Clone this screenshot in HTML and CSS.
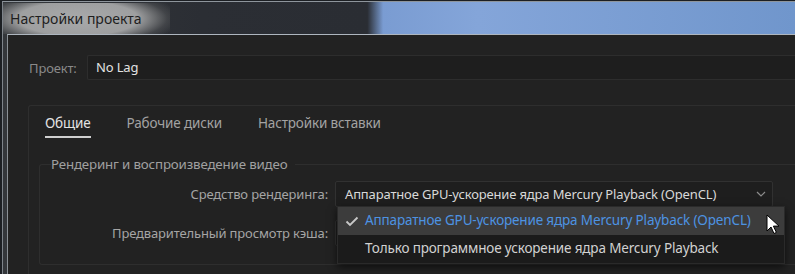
FILE: index.html
```html
<!DOCTYPE html>
<html lang="ru">
<head>
    <meta charset="UTF-8">
    <title>Настройки проекта</title>
    <link rel="stylesheet" href="styles.css">
</head>
<body>
    <div class="frame">
        <div class="titlebar">
            <span class="title">Настройки проекта</span>
        </div>
        <div class="window">
            <div class="project-row">
                <span class="project-label">Проект:</span>
                <div class="project-field">No Lag</div>
            </div>

            <div class="panel">
                <div class="tabs">
                    <span class="tab active">Общие</span>
                    <span class="tab">Рабочие диски</span>
                    <span class="tab">Настройки вставки</span>
                </div>

                <fieldset class="group">
                    <legend>Рендеринг и воспроизведение видео</legend>
                    <div class="rows">
                        <span class="row-label">Средство рендеринга:</span>
                        <div class="select open">
                            <span>Аппаратное GPU-ускорение ядра Mercury Playback (OpenCL)</span>
                            <svg class="chevron" width="10" height="6" viewBox="0 0 10 6"><path d="M1 1l4 4 4-4" fill="none" stroke="#8c8c8c" stroke-width="1.2"/></svg>
                            <ul class="menu">
                                <li class="selected">
                                    <svg class="check" width="14" height="11" viewBox="0 0 14 11"><path d="M1.5 5.5l3.5 3.5 7.5-7.5" fill="none" stroke="#c8c8c8" stroke-width="1.8"/></svg>
                                    Аппаратное GPU-ускорение ядра Mercury Playback (OpenCL)
                                </li>
                                <li>Только программное ускорение ядра Mercury Playback</li>
                            </ul>
                            <svg class="cursor" width="14" height="21" viewBox="0 0 14 21"><path d="M1 1v16l4-4 3 6.5 2.4-1.1-3-6.3h5.6z" fill="#fff" stroke="#000" stroke-width="1"/></svg>
                        </div>

                        <span class="row-label">Предварительный просмотр кэша:</span>
                        <div class="select"><span>Нет</span></div>
                    </div>
                </fieldset>
            </div>
        </div>
    </div>
</body>
</html>
```

FILE: styles.css
```css
body {
    margin: 0;
    width: 795px;
    height: 274px;
    overflow: hidden;
    background: #1c1f23;
    font-family: "Noto Sans", "Open Sans", sans-serif;
    font-size: 13px;
    letter-spacing: -0.15px;
}
.frame {
    box-sizing: border-box;
    margin: 1px 0 0 2px;
    height: 273px;
    border-left: 1px solid #7e848b;
    border-top: 1px solid #8e959c;
    padding-left: 4px;
    background: linear-gradient(to right, #34373b 0, #2b2e34 25%, #2a2d33 46%, #7a9cd2 48%, #84a5d9 60%, #7096cc 100%);
    display: flex;
    flex-direction: column;
    overflow: hidden;
}
.titlebar {
    height: 32px;
    flex: none;
    display: flex;
    align-items: center;
    margin-left: -4px;
}
.title {
    padding: 6px 28px 6px 7px;
    font-size: 14px;
    letter-spacing: 0;
    color: #1e1e1e;
    background: radial-gradient(ellipse 62% 95% at 45% 50%, #a8a9aa 0, #9e9fa0 58%, rgba(80,82,85,0.6) 86%, rgba(45,48,52,0) 100%);
}
.window {
    flex: 1;
    background: #222222;
    border-top: 1px solid #aeb6bf;
    border-left: 1px solid #8a9096;
    padding: 20px 0 0 21px;
}
.project-row {
    display: flex;
    align-items: center;
    height: 25px;
}
.project-label {
    width: 58px;
    color: #8a8a8a;
}
.project-field {
    flex: 1;
    height: 23px;
    line-height: 23px;
    padding-left: 8px;
    background: #1e1e1e;
    border: 1px solid #2d2d2d;
    border-right: none;
    border-radius: 2px 0 0 2px;
    color: #e2e2e2;
}
.panel {
    margin: 25px 0 0 -1px;
    border: 1px solid #2e2e2e;
    border-right: none;
    border-bottom: none;
    border-radius: 3px 0 0 0;
    padding: 8px 0 0 10px;
    height: 180px;
}
.tabs {
    display: flex;
    gap: 36px;
    padding-left: 6px;
    font-size: 13.5px;
}
.tab {
    color: #a3a3a3;
    padding-bottom: 4px;
    border-bottom: 2px solid transparent;
}
.tab.active {
    color: #e4e4e4;
    border-bottom-color: #cfcfcf;
}
.group {
    margin: 16px 0 0 0;
    border: 1px solid #2e2e2e;
    border-right: none;
    border-radius: 3px 0 0 3px;
    padding: 7px 0 18px 11px;
    min-width: 0;
}
.group legend {
    padding: 0 8px 0 0;
    line-height: 20px;
    font-size: 13.3px;
    color: #a0a0a0;
}
.rows {
    display: grid;
    grid-template-columns: 277px 438px;
    column-gap: 7px;
    row-gap: 13px;
    align-items: center;
}
.row-label {
    text-align: right;
    color: #a5a5a5;
    white-space: nowrap;
}
.select {
    position: relative;
    height: 24px;
    display: flex;
    align-items: center;
    justify-content: space-between;
    padding: 0 6px 0 9px;
    background: #1e1e1e;
    border: 1px solid #313131;
    border-radius: 2px;
    color: #d9d9d9;
    white-space: nowrap;
}
.select.open {
    z-index: 2;
}
.menu {
    position: absolute;
    top: 24px;
    left: 1px;
    width: 446px;
    margin: 0;
    padding: 0;
    list-style: none;
    background: #1b1b1b;
    border: 1px solid #2a2a2a;
    box-shadow: 0 3px 8px rgba(0, 0, 0, 0.6);
    font-size: 13.5px;
}
.menu li {
    height: 28px;
    line-height: 27px;
    padding-left: 27px;
    position: relative;
    color: #d2d2d2;
}
.menu li.selected {
    background: #3c3c3c;
    color: #4d93e2;
}
.check {
    position: absolute;
    left: 7px;
    top: 9px;
}
.cursor {
    position: absolute;
    left: 430px;
    top: 32px;
}
```
